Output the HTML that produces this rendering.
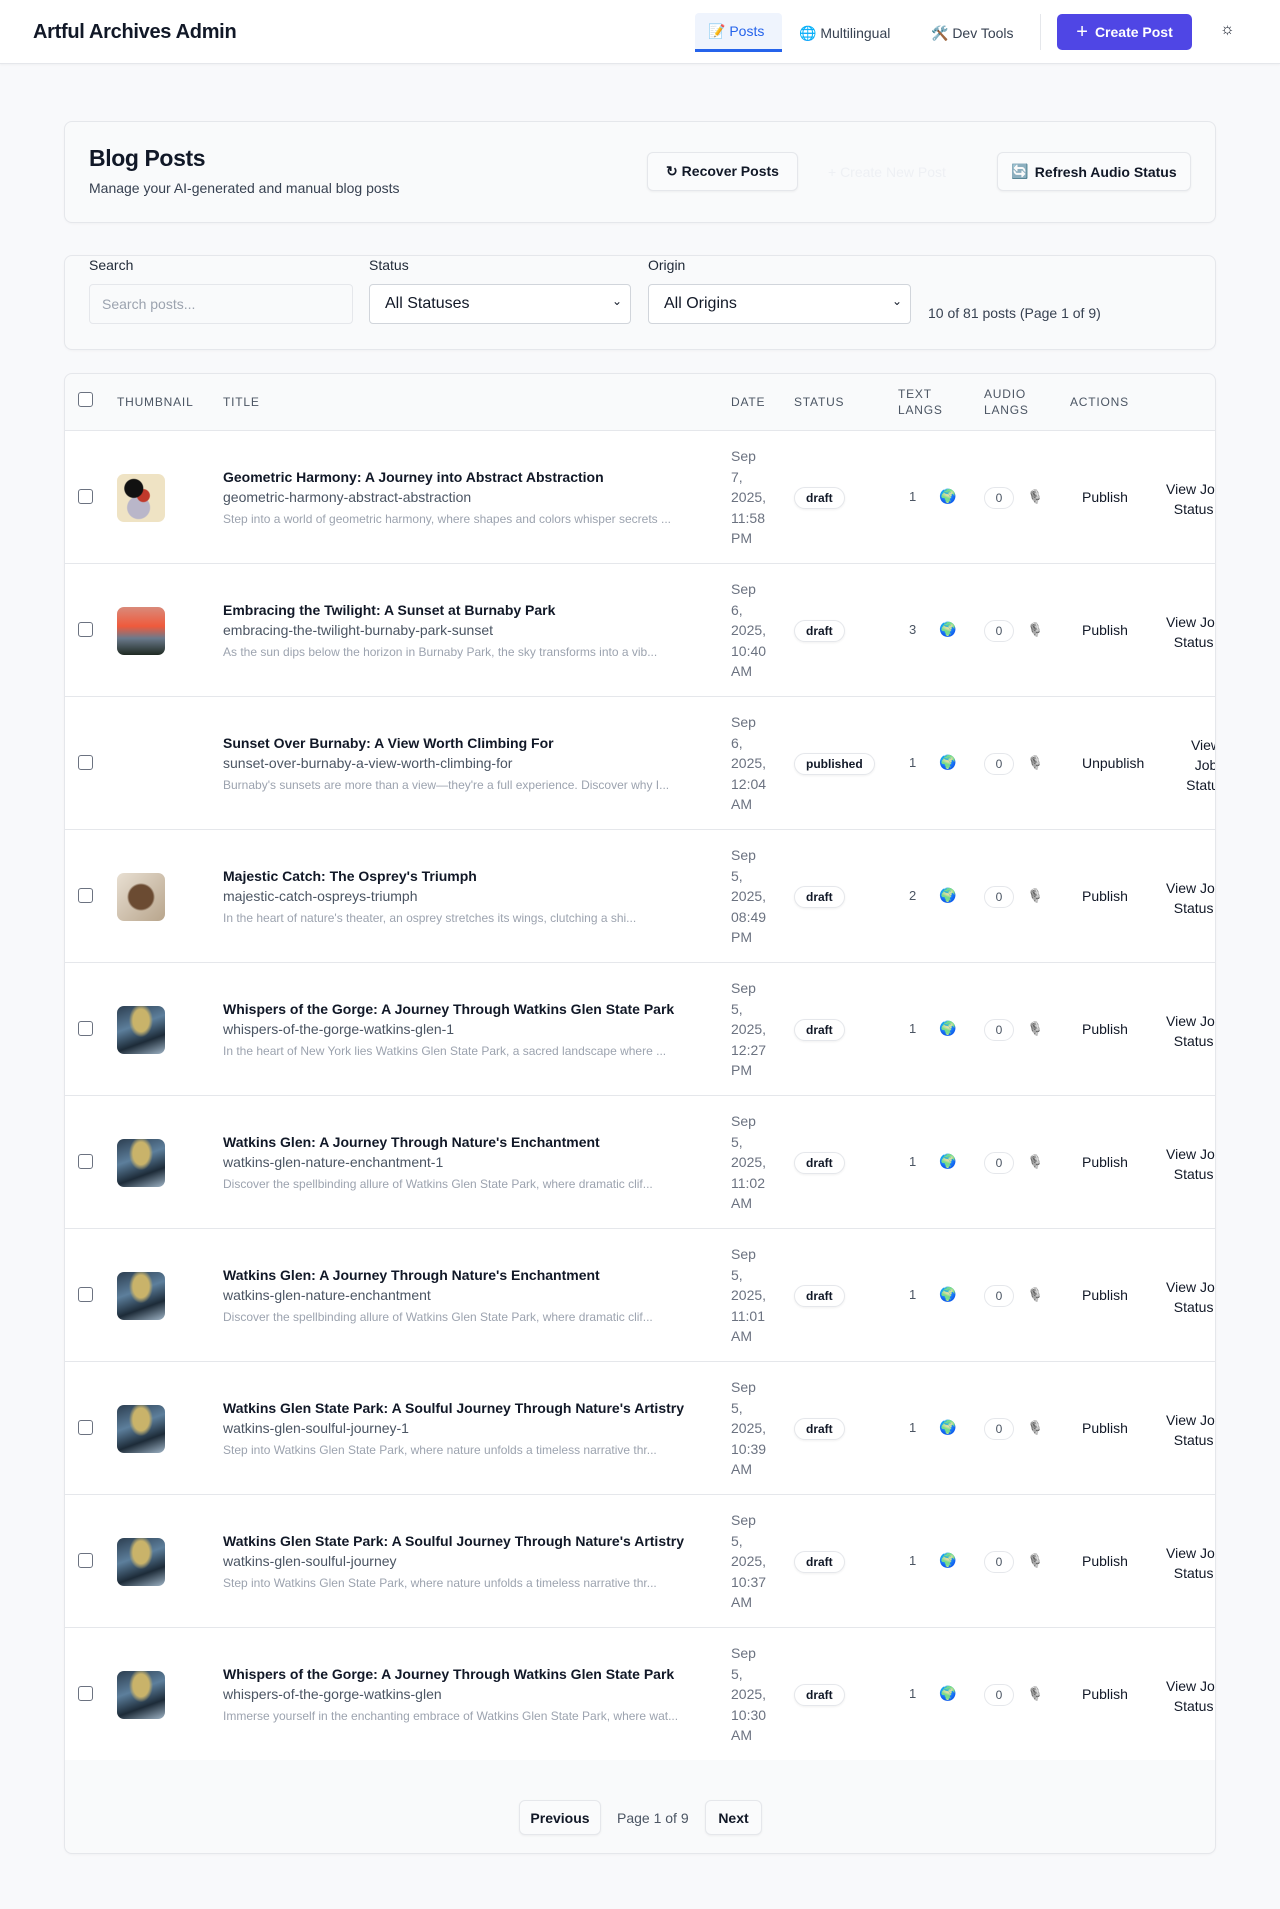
<!DOCTYPE html>
<html><head><meta charset="utf-8">
<style>
*{box-sizing:border-box;margin:0;padding:0}
body{width:1280px;height:1909px;background:#f8f9fb;font-family:"Liberation Sans",Arial,sans-serif;color:#111827;position:relative;overflow:hidden}
.hdr{position:absolute;left:0;top:0;width:1280px;height:64px;background:#fff;border-bottom:1px solid #e5e7eb;box-shadow:0 1px 2px rgba(0,0,0,.04)}
.logo{position:absolute;left:33px;top:21px;font-size:20px;font-weight:700;letter-spacing:-.3px}
.nav{position:absolute;top:13px;height:40px;font-size:14px;display:flex;align-items:center;gap:6px;color:#374151}
.abs{position:absolute}
.card{position:absolute;left:64px;width:1152px;border:1px solid #e5e7eb;border-radius:8px;background:#f9fafb;box-shadow:0 1px 2px rgba(0,0,0,.03)}
.btn{position:absolute;height:39px;border:1px solid #e5e7eb;border-radius:6px;background:#fafbfc;font-size:14px;font-weight:700;display:flex;align-items:center;justify-content:center;gap:6px;box-shadow:0 1px 2px rgba(0,0,0,.05)}
.lbl{position:absolute;top:257px;font-size:14px;color:#1f2937}
.inp{position:absolute;top:284px;height:40px;border:1px solid #d1d5db;border-radius:4px;background:#fff;font-size:16px;padding:0 15px;display:flex;align-items:center}
.inp .ch{position:absolute;right:8px;top:9px;font-size:12px}
.th{position:absolute;font-size:12px;color:#4b5563;letter-spacing:.8px;line-height:16px}
.row{position:absolute;left:65px;width:1150px;height:133px;background:#fff;border-top:1px solid #e5e7eb;overflow:hidden}
.cb{position:absolute;left:13px;width:15px;height:15px;border:1.5px solid #6b7280;border-radius:3px;background:#fff}
.thumb{position:absolute;left:52px;width:48px;height:48px;border-radius:7px;overflow:hidden}
.t1{position:absolute;left:158px;font-size:14px;font-weight:600;color:#111827}
.t2{position:absolute;left:158px;font-size:14px;color:#4b5563}
.t3{position:absolute;left:158px;font-size:12px;color:#9ca3af;width:480px;white-space:nowrap;overflow:hidden}
.date{position:absolute;left:666px;font-size:14px;line-height:20.5px;color:#6b7280;width:44px}
.pill{position:absolute;left:729px;height:22px;border:1px solid #e5e7eb;border-radius:11px;font-size:12px;font-weight:700;display:flex;align-items:center;padding:0 11px;background:#fff;box-shadow:0 1px 2px rgba(0,0,0,.06)}
.n{position:absolute;left:844px;font-size:13px;color:#4b5563}
.globe{position:absolute;left:874px;font-size:14px}
.zero{position:absolute;left:919px;width:30px;height:22px;border:1px solid #e5e7eb;border-radius:11px;font-size:12px;color:#4b5563;display:flex;align-items:center;justify-content:center;background:#fff}
.mic{position:absolute;left:962px;font-size:13px;filter:grayscale(1)}
.act{position:absolute;font-size:14px;font-weight:500}
.vj{position:absolute;left:1100px;font-size:14px;font-weight:500;text-align:center;line-height:20px;width:76px}
</style></head><body>
<div class="hdr">
 <div class="logo">Artful Archives Admin</div>
 <div class="nav" style="left:695px;width:87px;height:39px;background:#eff4fd;border-radius:4px 4px 0 0;border-bottom:3px solid #2563eb;padding-left:13px;color:#2563eb;font-weight:500">📝 Posts</div>
 <div class="nav" style="left:799px">🌐 Multilingual</div>
 <div class="nav" style="left:931px">🛠️ Dev Tools</div>
 <div class="abs" style="left:1040px;top:14px;width:1px;height:36px;background:#e5e7eb"></div>
 <div class="abs" style="left:1057px;top:14px;width:135px;height:36px;background:#4f46e5;border-radius:5px;color:#fff;font-size:14px;font-weight:700;display:flex;align-items:center;justify-content:center;gap:7px"><span style="font-size:20px;font-weight:400;line-height:1">+</span>Create Post</div>
 <div class="abs" style="left:1220px;top:21px;font-size:16px">☼</div>
</div>

<div class="card" style="top:121px;height:102px"></div>
<div class="abs" style="left:89px;top:145px;font-size:23px;font-weight:700;letter-spacing:-.4px">Blog Posts</div>
<div class="abs" style="left:89px;top:180px;font-size:14px;color:#374151">Manage your AI-generated and manual blog posts</div>
<div class="btn" style="left:647px;top:152px;width:151px">↻ Recover Posts</div>
<div class="abs" style="left:828px;top:164px;font-size:14px;color:#eef0f4">+ Create New Post</div>
<div class="btn" style="left:997px;top:152px;width:194px"><span style="color:#3b82f6">🔄</span>Refresh Audio Status</div>

<div class="card" style="top:255px;height:95px"></div>
<div class="lbl" style="left:89px">Search</div>
<div class="lbl" style="left:369px">Status</div>
<div class="lbl" style="left:648px">Origin</div>
<div class="inp" style="left:89px;width:264px;background:#f9fafb;border-color:#e5e7eb;font-size:14px;color:#9ca3af;padding-left:12px">Search posts...</div>
<div class="inp" style="left:369px;width:262px">All Statuses<span class="ch">⌄</span></div>
<div class="inp" style="left:648px;width:263px">All Origins<span class="ch">⌄</span></div>
<div class="abs" style="left:928px;top:305px;font-size:14px;color:#374151">10 of 81 posts (Page 1 of 9)</div>

<div class="card" style="top:373px;height:1481px;overflow:hidden"></div>
<div class="cb" style="left:78px;top:392px"></div>
<div class="th" style="left:117px;top:394px">THUMBNAIL</div>
<div class="th" style="left:223px;top:394px">TITLE</div>
<div class="th" style="left:731px;top:394px">DATE</div>
<div class="th" style="left:794px;top:394px">STATUS</div>
<div class="th" style="left:898px;top:386px">TEXT<br>LANGS</div>
<div class="th" style="left:984px;top:386px">AUDIO<br>LANGS</div>
<div class="th" style="left:1070px;top:394px">ACTIONS</div>

<div id="rows"></div>
<div class="btn" style="left:519px;top:1800px;width:82px;height:35px;font-weight:600">Previous</div>
<div class="abs" style="left:617px;top:1810px;font-size:14px;color:#4b5563">Page 1 of 9</div>
<div class="btn" style="left:705px;top:1800px;width:57px;height:35px;font-weight:600">Next</div>

<script>
var R=[
["Geometric Harmony: A Journey into Abstract Abstraction","geometric-harmony-abstract-abstraction","Step into a world of geometric harmony, where shapes and colors whisper secrets ...",["Sep","7,","2025,","11:58","PM"],"draft","1","g"],
["Embracing the Twilight: A Sunset at Burnaby Park","embracing-the-twilight-burnaby-park-sunset","As the sun dips below the horizon in Burnaby Park, the sky transforms into a vib...",["Sep","6,","2025,","10:40","AM"],"draft","3","s"],
["Sunset Over Burnaby: A View Worth Climbing For","sunset-over-burnaby-a-view-worth-climbing-for","Burnaby's sunsets are more than a view—they're a full experience. Discover why I...",["Sep","6,","2025,","12:04","AM"],"published","1",""],
["Majestic Catch: The Osprey's Triumph","majestic-catch-ospreys-triumph","In the heart of nature's theater, an osprey stretches its wings, clutching a shi...",["Sep","5,","2025,","08:49","PM"],"draft","2","o"],
["Whispers of the Gorge: A Journey Through Watkins Glen State Park","whispers-of-the-gorge-watkins-glen-1","In the heart of New York lies Watkins Glen State Park, a sacred landscape where ...",["Sep","5,","2025,","12:27","PM"],"draft","1","w"],
["Watkins Glen: A Journey Through Nature's Enchantment","watkins-glen-nature-enchantment-1","Discover the spellbinding allure of Watkins Glen State Park, where dramatic clif...",["Sep","5,","2025,","11:02","AM"],"draft","1","w"],
["Watkins Glen: A Journey Through Nature's Enchantment","watkins-glen-nature-enchantment","Discover the spellbinding allure of Watkins Glen State Park, where dramatic clif...",["Sep","5,","2025,","11:01","AM"],"draft","1","w"],
["Watkins Glen State Park: A Soulful Journey Through Nature's Artistry","watkins-glen-soulful-journey-1","Step into Watkins Glen State Park, where nature unfolds a timeless narrative thr...",["Sep","5,","2025,","10:39","AM"],"draft","1","w"],
["Watkins Glen State Park: A Soulful Journey Through Nature's Artistry","watkins-glen-soulful-journey","Step into Watkins Glen State Park, where nature unfolds a timeless narrative thr...",["Sep","5,","2025,","10:37","AM"],"draft","1","w"],
["Whispers of the Gorge: A Journey Through Watkins Glen State Park","whispers-of-the-gorge-watkins-glen","Immerse yourself in the enchanting embrace of Watkins Glen State Park, where wat...",["Sep","5,","2025,","10:30","AM"],"draft","1","w"]];
var TH={g:"background:radial-gradient(circle at 35% 30%,#111 0 9px,transparent 10px),radial-gradient(circle at 55% 45%,#c0392b 0 6px,transparent 7px),radial-gradient(circle at 45% 70%,#b9b6c9 0 11px,transparent 12px),#efe3c4",
s:"background:linear-gradient(180deg,#d98a7a 0%,#ef5a3c 40%,#6b7a8c 65%,#1f2a22 100%)",
o:"background:radial-gradient(ellipse at 50% 50%,#6b4b32 0 12px,transparent 14px),linear-gradient(135deg,#e8dfd2,#b8a58c)",
w:"background:radial-gradient(ellipse at 50% 30%,#c9b36a 0 8px,transparent 12px),linear-gradient(160deg,#2c3e50 0%,#5d7f9c 40%,#1d2b38 70%,#9fb4c6 100%)"};
var h="";
for(var i=0;i<R.length;i++){var r=R[i],t=430+i*133;
h+='<div class="row" style="top:'+t+'px">';
h+='<div class="cb" style="top:58px"></div>';
if(r[6])h+='<div class="thumb" style="top:43px;'+TH[r[6]]+'"></div>';
h+='<div class="t1" style="top:38px">'+r[0]+'</div><div class="t2" style="top:58px">'+r[1]+'</div><div class="t3" style="top:81px">'+r[2]+'</div>';
h+='<div class="date" style="top:15px">'+r[3].join('<br>')+'</div>';
h+='<div class="pill" style="top:56px">'+r[4]+'</div>';
h+='<div class="n" style="top:58px">'+r[5]+'</div><div class="globe" style="top:57px">🌍</div>';
h+='<div class="zero" style="top:56px">0</div><div class="mic" style="top:58px">🎙️</div>';
if(r[4]=="published"){h+='<div class="act" style="left:1017px;top:58px">Unpublish</div><div class="vj" style="left:1111px;top:38px;width:60px">View<br>Job<br>Status</div>';}
else{h+='<div class="act" style="left:1017px;top:58px">Publish</div><div class="vj" style="left:1101px;top:48px;width:80px;text-align:left">View Job<br>&nbsp;&nbsp;Status</div>';}
h+='</div>';}
document.getElementById('rows').innerHTML=h;
</script>
</body></html>
